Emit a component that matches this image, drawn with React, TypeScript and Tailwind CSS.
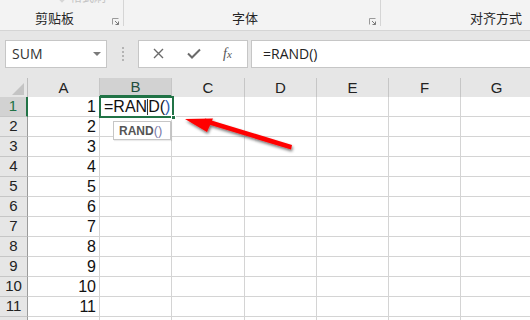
import React from "react";

const cjk = { fontFamily: '"Microsoft YaHei", "Noto Sans CJK SC", sans-serif' };
const sans = { fontFamily: '"Liberation Sans", Arial, sans-serif' };

const cols = [
  { key: "A", w: 72 },
  { key: "B", w: 72 },
  { key: "C", w: 73 },
  { key: "D", w: 72 },
  { key: "E", w: 72 },
  { key: "F", w: 72 },
  { key: "G", w: 72 },
];

const rows = [1, 2, 3, 4, 5, 6, 7, 8, 9, 10, 11, 12];

function Launcher() {
  return (
    <svg width="7" height="7" viewBox="0 0 7 7" className="shrink-0">
      <path d="M0.5 6.5V0.5H6.5" fill="none" stroke="#9a9a9a" strokeWidth="1" />
      <path d="M3 3L6.5 6.5M6.5 3.5V6.5H3.5" fill="none" stroke="#7a7a7a" strokeWidth="1" />
    </svg>
  );
}

function Ribbon() {
  return (
    <div className="relative h-[31px] overflow-hidden border-b border-[#d5d5d5] bg-[#f3f3f3]" style={cjk}>
      {/* button label cut off by the top edge */}
      <div className="absolute left-[58px] top-[-12px] flex items-center gap-1 text-[12px] text-[#c4c4c4]">
        <span className="inline-block h-[8px] w-[8px] rotate-45 bg-[#d6d6d6]" />
        <span>格式刷</span>
      </div>
      <div className="flex h-full">
        <div className="flex w-[123px] items-end pb-[3px]">
          <span className="ml-[35px] text-[13px] text-[#262626]">剪贴板</span>
          <span className="mb-[2px] ml-auto mr-[4px]">
            <Launcher />
          </span>
        </div>
        <div className="h-[26px] w-px bg-[#d5d5d5]" />
        <div className="flex w-[256px] items-end pb-[3px]">
          <span className="ml-[108px] text-[13px] text-[#262626]">字体</span>
          <span className="mb-[2px] ml-auto mr-[4px]">
            <Launcher />
          </span>
        </div>
        <div className="h-[26px] w-px bg-[#d5d5d5]" />
        <div className="flex flex-1 items-end pb-[3px]">
          <span className="ml-[89px] text-[13px] text-[#262626]">对齐方式</span>
        </div>
      </div>
    </div>
  );
}

function FormulaBar() {
  return (
    <div className="flex h-[47px] items-center bg-[#e6e6e6] pl-[5px] pb-[2px]" style={sans}>
      <div className="flex h-[28px] w-[102px] items-center border border-[#c6c6c6] bg-white pl-[6px] pr-[5px]">
        <span className="text-[14px] text-[#333]" style={{ fontFamily: '"Segoe UI", "Open Sans", sans-serif' }}>
          SUM
        </span>
        <svg width="8" height="4" viewBox="0 0 8 4" className="ml-auto">
          <path d="M0 0H8L4 4Z" fill="#7a7a7a" />
        </svg>
      </div>
      <div className="flex w-[31px] flex-col items-center gap-[2px]">
        <span className="h-[2px] w-[2px] bg-[#b4b4b4]" />
        <span className="h-[2px] w-[2px] bg-[#b4b4b4]" />
        <span className="h-[2px] w-[2px] bg-[#b4b4b4]" />
        <span className="h-[2px] w-[2px] bg-[#b4b4b4]" />
      </div>
      <div className="flex h-[28px] w-[110px] items-center border border-[#c6c6c6] bg-white">
        <svg width="11" height="11" viewBox="0 0 11 11" className="ml-[14px]">
          <path d="M1 1L10 10M10 1L1 10" stroke="#6a6a6a" strokeWidth="1.4" />
        </svg>
        <svg width="14" height="11" viewBox="0 0 14 11" className="ml-[23px]">
          <path d="M1 5.5L5 9.5L13 1.5" fill="none" stroke="#6a6a6a" strokeWidth="2" />
        </svg>
        <span
          className="ml-[22px] text-[14px] italic text-[#555]"
          style={{ fontFamily: '"Liberation Serif", serif' }}
        >
          f<span className="text-[11px]">x</span>
        </span>
      </div>
      <div className="ml-[3px] flex h-[28px] flex-1 items-center border-y border-l border-[#c6c6c6] bg-white pl-[11px]">
        <span className="text-[14px] text-[#222]" style={{ fontFamily: '"Segoe UI", "Open Sans", sans-serif' }}>
          =RAND()
        </span>
      </div>
    </div>
  );
}

function Grid() {
  return (
    <div className="relative" style={sans}>
      {/* column headers */}
      <div className="flex h-[19px] bg-[#e6e6e6]">
        <div className="relative w-[28px] shrink-0 border-r border-[#bdbdbd]">
          <svg width="12" height="12" viewBox="0 0 12 12" className="absolute bottom-[2px] right-[3px]">
            <path d="M12 0V12H0Z" fill="#c4c4c4" />
          </svg>
        </div>
        {cols.map((c) => (
          <div
            key={c.key}
            style={{ width: c.w }}
            className={
              c.key === "B"
                ? "flex shrink-0 items-center justify-center border-r border-b-2 border-[#c6c6c6] border-b-[#217346] bg-[#d2d2d2] pt-[2px] text-[15px] text-[#1f4e3d]"
                : "flex shrink-0 items-center justify-center border-r border-[#c6c6c6] pt-[2px] text-[15px] text-[#222]"
            }
          >
            {c.key}
          </div>
        ))}
      </div>
      {/* rows */}
      {rows.map((r) => (
        <div key={r} className="flex h-[20px]">
          <div
            className={
              r === 1
                ? "flex w-[28px] shrink-0 items-center justify-center border-b border-r-2 border-[#c6c6c6] border-r-[#217346] bg-[#d2d2d2] text-[15px] text-[#217346]"
                : "flex w-[28px] shrink-0 items-center justify-center border-b border-r border-[#c6c6c6] border-r-[#9b9b9b] bg-[#e6e6e6] text-[15px] text-[#222]"
            }
          >
            {r <= 11 ? r : null}
          </div>
          {cols.map((c) => (
            <div
              key={c.key}
              style={{ width: c.w }}
              className="flex shrink-0 items-center justify-end border-b border-r border-[#d4d4d4] bg-white pr-[3px] text-[16px] text-[#111]"
            >
              {c.key === "A" && r <= 11 ? r : null}
            </div>
          ))}
        </div>
      ))}

      {/* active cell B1 */}
      <div className="absolute left-[99px] top-[18px] flex h-[22px] w-[75px] items-center border-2 border-[#217346] bg-white pl-[3px]">
        <span className="text-[16px] leading-none text-[#111]">=RAN</span>
        <span className="h-[16px] w-px bg-[#333]" />
        <span className="text-[16px] leading-none text-[#111]">D(</span>
        <span className="text-[16px] leading-none text-[#2b5fb3]">)</span>
        <span className="absolute -bottom-[4px] -right-[4px] h-[5px] w-[5px] border border-white bg-[#217346]" />
      </div>

      {/* function tooltip */}
      <div className="absolute left-[113px] top-[43px] flex h-[19px] w-[58px] items-center border border-[#c6c6c6] bg-white pl-[5px] shadow-[1px_1px_1px_rgba(0,0,0,0.08)]">
        <span className="text-[12px] font-bold text-[#555]">RAND</span>
        <span className="text-[13px] text-[#7a7aa8]">()</span>
      </div>

      {/* annotation arrow */}
      <svg
        width="130"
        height="60"
        viewBox="0 0 130 60"
        className="pointer-events-none absolute left-[175px] top-[27px]"
      >
        <defs>
          <filter id="sh" x="-20%" y="-40%" width="140%" height="180%">
            <feGaussianBlur in="SourceAlpha" stdDeviation="1.6" />
            <feOffset dx="1" dy="2" />
            <feComponentTransfer>
              <feFuncA type="linear" slope="0.55" />
            </feComponentTransfer>
            <feMerge>
              <feMergeNode />
              <feMergeNode in="SourceGraphic" />
            </feMerge>
          </filter>
        </defs>
        <g filter="url(#sh)">
          <path d="M30 13.5L117 40L116 44.5L29 18Z" fill="#ff0000" />
          <path d="M10 14L38 13.5L32 27Z" fill="#ff0000" />
        </g>
      </svg>
    </div>
  );
}

export default function App() {
  return (
    <div className="h-[320px] w-[530px] overflow-hidden bg-white">
      <Ribbon />
      <FormulaBar />
      <Grid />
    </div>
  );
}
